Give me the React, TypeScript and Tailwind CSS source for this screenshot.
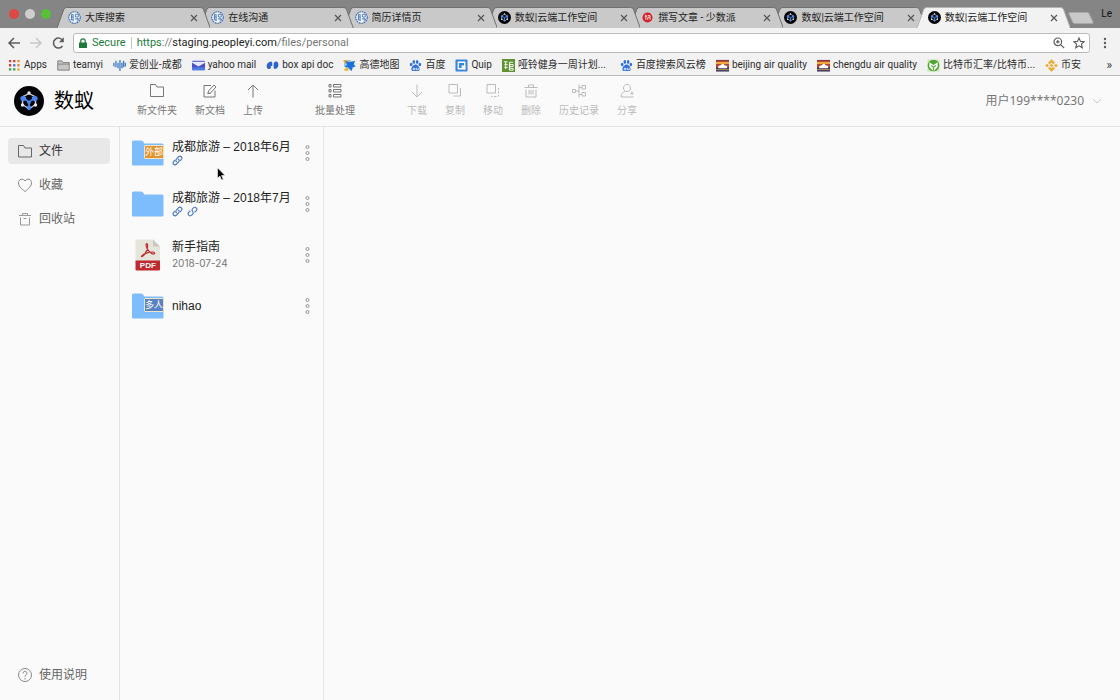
import React from "react";

const tabs = [
  { title: "大库搜索", icon: "hire" },
  { title: "在线沟通", icon: "hire" },
  { title: "简历详情页", icon: "hire" },
  { title: "数蚁|云端工作空间", icon: "ant" },
  { title: "撰写文章 - 少数派", icon: "sspai" },
  { title: "数蚁|云端工作空间", icon: "ant" },
  { title: "数蚁|云端工作空间", icon: "ant" },
];

const bookmarks = [
  { title: "Apps", icon: "apps" },
  { title: "teamyi", icon: "folder" },
  { title: "爱创业-成都", icon: "wave" },
  { title: "yahoo mail", icon: "mail" },
  { title: "box api doc", icon: "box" },
  { title: "高德地图", icon: "amap" },
  { title: "百度", icon: "paw" },
  { title: "Quip", icon: "quip" },
  { title: "哑铃健身一周计划...", icon: "gym", wide: true },
  { title: "百度搜索风云榜", icon: "paw" },
  { title: "beijing air quality", icon: "air" },
  { title: "chengdu air quality", icon: "air" },
  { title: "比特币汇率/比特币...", icon: "coin", wide: true },
  { title: "币安", icon: "binance" },
];

const actions = [
  { title: "新文件夹", icon: "folder", box: "w-[58px]" },
  { title: "新文档", icon: "edit", box: "w-12" },
  { title: "上传", icon: "up", box: "w-[38px]" },
  { title: "批量处理", icon: "batch", box: "mx-[34px] w-[58px]" },
  { title: "下载", icon: "down", box: "w-[38px]", disabled: true },
  { title: "复制", icon: "copy", box: "w-[38px]", disabled: true },
  { title: "移动", icon: "move", box: "w-[38px]", disabled: true },
  { title: "删除", icon: "trash", box: "w-[38px]", disabled: true },
  { title: "历史记录", icon: "history", box: "w-[58px]", disabled: true },
  { title: "分享", icon: "share", box: "w-[38px]", disabled: true },
];

const files = [
  { name: "成都旅游 – 2018年6月", type: "folder", badge: "外部", badgeBg: "bg-[#e2942f]", links: ["share"] },
  { name: "成都旅游 – 2018年7月", type: "folder", links: ["share", "collect"] },
  { name: "新手指南", type: "pdf", date: "2018-07-24" },
  { name: "nihao", type: "folder", badge: "多人", badgeBg: "bg-[#5783c4]" },
];

const AntLogo = ({ className }: { className: string }) => (
  <svg viewBox="0 0 30 30" className={className}>
    <circle cx="15" cy="15" r="15" fill="#050507" />
    <path d="M15 7.500 21.500 11v7.500L15 23l-6.500-4.500V11z" fill="none" stroke="#c9ced6" strokeWidth="1.400" />
    <path d="M9.500 12 15 16l5.500-4M15 16v6" fill="none" stroke="#3f76dc" strokeWidth="2" />
    <g fill="#4c86ee">
      <path d="m6.500 11 2.800-1.600 2.800 1.600v3l-2.800 1.600L6.500 14zM17.900 11l2.800-1.600 2.800 1.600v3l-2.800 1.600-2.800-1.600z" />
      <circle cx="15" cy="16.500" r="1.800" />
      <path d="m12.800 20.500 2.200-1.200 2.200 1.200V23L15 24.200 12.800 23z" />
    </g>
    <g fill="#e8ebf0">
      <circle cx="15" cy="7" r="1.700" />
      <circle cx="8.500" cy="19" r="1.700" />
      <circle cx="21.500" cy="19" r="1.700" />
    </g>
  </svg>
);

const TabIcon = ({ name }: { name: string }) => {
  if (name === "ant") return <AntLogo className="size-[13px] shrink-0" />;
  if (name === "sspai")
    return (
      <svg viewBox="0 0 12 12" className="mx-px size-[11px] shrink-0">
        <circle cx="6" cy="6" r="5.500" fill="#d2232a" />
        <path d="M3 4.500h2.500M4.200 3v5.500M6.300 4h2.500v1.800H6.300v2.700M8.800 6v2.500" stroke="#fff" strokeWidth=".9" fill="none" />
      </svg>
    );
  return (
    <svg viewBox="0 0 14 14" className="size-[13px] shrink-0">
      <circle cx="7" cy="7" r="6.200" fill="#f4f7fb" stroke="#3f6fb5" strokeWidth="1.200" strokeDasharray="2 .6" />
      <path d="M3 4h3M3 6.500h3M2.500 9.500H6M3.800 4v5.500M5.500 4v7M8 3.500h3v3H8zM7.500 8.500h4M9 8.500h2.200c0 1.500-.5 2.500-2 2.500" fill="none" stroke="#3f6fb5" strokeWidth=".9" />
    </svg>
  );
};

const bookmarkArt: Record<string, React.ReactNode> = {
  apps: (
    <>
      <path d="M1 1h2.500v2.500H1zM5.500 1H8v2.500H5.500zM1 5.500h2.500V8H1z" fill="#d6453b" />
      <path d="M10 1h2.500v2.500H10zM10 5.500h2.500V8H10z" fill="#e08c36" />
      <path d="M5.500 5.500H8V8H5.500z" fill="#3d78d8" />
      <path d="M1 10h2.500v2.500H1zM5.500 10H8v2.500H5.500z" fill="#3c9a50" />
      <path d="M10 10h2.500v2.500H10z" fill="#e0a82e" />
    </>
  ),
  folder: <path d="M.8 12V2h4.500l1.200 1.800h6.700V12zM.8 5.500h12.400" fill="#c6c6c6" stroke="#777" strokeWidth=".9" />,
  wave: <path d="M1 4v4M3.200 2v7M5.400 4v6M7.500 1v12M9.600 4v6M11.400 2v7M13.300 4v4" stroke="#3e7cc4" strokeWidth="1.400" fill="none" />,
  mail: (
    <>
      <rect x="0" y="2" width="14" height="10" rx="1" fill="#4a4fc4" />
      <path d="M0 3h14v1L7 8 0 4z" fill="#e5e9fb" />
      <path d="M0 9h14v3H0z" fill="#4c7de6" />
    </>
  ),
  box: (
    <path d="M6 3.500C2.500 3.500 1.300 6 1.500 8.200c.3 2.500 2.500 2.300 3.500.5M6 7.500V3.500M9 10c3.500 0 4-3.500 3.200-5.700C11.300 2.800 9.500 3.500 9 5v5" fill="#2d63cf" stroke="#2d63cf" strokeWidth="1.500" />
  ),
  amap: (
    <>
      <path d="M1 1h7l5 6-4 6-8-5z" fill="#8cc4ee" />
      <path d="m0 1 5 0 2 3-5 1z" fill="#f0b93a" />
      <path d="m13 2-6 1.500L2 2l2.500 4L2 8.500l3.500.5L9.500 13l.5-4 3.500-1-2-2z" fill="#1f6fd8" />
      <path d="m1 11 4-2 1 4H2z" fill="#f0b93a" />
    </>
  ),
  paw: (
    <g fill="#2f6fdc">
      <ellipse cx="2.300" cy="6" rx="1.400" ry="1.900" />
      <ellipse cx="5.200" cy="3.200" rx="1.400" ry="2" />
      <ellipse cx="8.800" cy="3.200" rx="1.400" ry="2" />
      <ellipse cx="11.700" cy="6" rx="1.400" ry="1.900" />
      <path d="M7 6c2 0 4.500 3 4.500 5s-2.500 2-4.500 2-4.500 0-4.500-2S5 6 7 6z" />
      <path d="M4.500 10h2v1.500h-2zM8 9.500v2h2v-2" fill="none" stroke="#fff" strokeWidth=".8" />
    </g>
  ),
  quip: (
    <>
      <rect x=".5" y=".5" width="13" height="13" rx="1" fill="#3a85dc" />
      <path d="M3.500 3.500h7v7h-7z" fill="none" stroke="#fff" strokeWidth="1.400" />
      <path d="M7 7h4.200v4.200H9.500L7 8.700z" fill="#fff" />
    </>
  ),
  gym: (
    <>
      <path d="M0 0h14v14H0z" fill="#5f9130" />
      <path d="M2 3h4M2.500 6H6M4 3v8M2.500 9H6M7.500 3.500h4.500M8 6h4v2H8zM8 10h4v2H8zM8 4v8" fill="none" stroke="#fff" strokeWidth="1" />
    </>
  ),
  air: (
    <>
      <path d="M0 1h14v12.500H0z" fill="#35355a" />
      <path d="M0 1.500h14V3H0z" fill="#c9362e" />
      <path d="M0 3h14v2.500H0z" fill="#f0a93c" />
      <path d="M0 5.500h14v3.500H0z" fill="#b9482f" />
      <path d="M2.500 10C1.500 7.500 3.500 6.500 4.800 7 6 4.500 9 5 9.500 7c2.500-.5 3.500 2 2 3z" fill="#fff" />
      <path d="M0 11h14v1H0z" fill="#caa35c" />
    </>
  ),
  coin: (
    <>
      <path d="M.5.500h13v13H.5z" fill="#cfe6bb" />
      <circle cx="7" cy="7" r="6.300" fill="#4fa52e" />
      <path d="M2.500 3.500 7 6.500l4.500-3v5L8 12.500H6l-3.500-4z" fill="#fff" />
      <path d="M4.500 7 7 9l2.500-2M7 9v3.500" stroke="#4fa52e" strokeWidth="1.200" fill="none" />
    </>
  ),
  binance: (
    <path d="m7 .5 3.500 3.500L9 5.500 7 3.500l-2 2L3.500 4zM7 5.300 8.700 7 7 8.700 5.300 7zM2.200 5.300 3.900 7 2.200 8.700.5 7zM11.800 5.300 13.500 7l-1.700 1.700L10.100 7zM7 10.500l2-2 1.500 1.500L7 13.500 3.500 10 5 8.500z" fill="#eba92c" stroke="#eba92c" strokeWidth=".5" />
  ),
};

const actionArt: Record<string, React.ReactNode> = {
  folder: <path d="M1.500 13.500v-12h5l1.500 2.500h6.500v9.500z" />,
  edit: <path d="M9 2.500H2v11.500h11V7.500M6 10.500l.5-2.500L12 2l2 2-5.500 6zM5.500 10.500h3" />,
  up: <path d="M8 14.500V2M3 7l5-5 5 5" />,
  down: <path d="M8 1.500V14M3 9l5 5 5-5" />,
  batch: <path d="M2 1.500h2v2.500H2zM6.500 1.500h7.500v2.500H6.500zM2 6.500h2V9H2zM6.500 6.500h7.500V9H6.500zM2 11.500h2V14H2zM6.500 11.500h7.500V14H6.500z" />,
  copy: <path d="M2 1.500h8.500V10H2zM13.500 5v8H6.500" />,
  move: <path d="M2 1.500h8.500V10H2zM13.500 5v2M13.500 8.500v2M13.500 12v1.500M11.500 13.500H9M7.500 13.500H6" />,
  trash: <path d="M1.500 4.500h13M5.500 4.500V2h5v2.500M3 6.500v7.500h10V6.500M6 7v4.500M8 7v4.500M10 7v4.500" />,
  history: <path d="M1.500 6.500h3v3h-3zM4.500 8H8M8 1.500v13M8 4.500h3M8 11.500h3M11 2.500h3.500v3.500H11zM11 9.500h3.500V13H11z" />,
  share: <path d="M8 1.500c2.200 0 3.500 1.500 3.500 3.500S10 8.500 8 8.500 4.500 7 4.500 5 5.800 1.500 8 1.500zM6 8.500c-2 1-4 2-4 5.500h12.500M13 8.500v3.500M11.300 10.200h3.500" />,
};

const LinkIcon = ({ kind }: { kind: string }) => (
  <svg viewBox="0 0 12 12" className="size-[11px]" fill="none" stroke="#4576c8" strokeWidth="1.200" strokeLinecap="round">
    {kind === "share" ? (
      <>
        <path d="M5 7.500C3.800 6.500 4 5.500 4.800 4.600l2.400-2.700c1.900-1.700 4.700.8 3.100 2.800L9 6.200" />
        <path d="M7 4.500c1.200 1 1 2 .2 2.900l-2.400 2.700C2.900 11.800.1 9.300 1.700 7.300L3 5.800" />
      </>
    ) : (
      <path d="M8.500 6.500 10.300 5c1.500-1.800-.8-4.600-3-3.200C5.500 3 5 4.500 6.200 6c1 1.500.5 3-1.300 4.200-2.200 1.400-4.700-1.200-3.200-3.200L3.500 5.500" />
    )}
  </svg>
);

const FolderIcon = () => (
  <svg viewBox="0 0 32 26" className="h-[26px] w-8">
    <path d="M0 2Q0 .5 1.500.5H9q1.500 0 2.200 1.200L12.500 3.500H30q1.500 0 1.500 1.500v19.500q0 1-1 1H1q-1 0-1-1z" fill="#7dbdfd" />
  </svg>
);

const PdfIcon = () => (
  <svg viewBox="0 0 26 32" className="mx-[3px] h-8 w-[26px]">
    <path d="M1.500.5h16.500l7 7V22H.5V1.500q0-1 1-1z" fill="#e6e5dc" />
    <path d="m18 .5 7 7h-6q-1 0-1-1z" fill="#c9c8bf" />
    <path d="M.5 21.500H25v9q0 1-1 1H1.500q-1 0-1-1z" fill="#c0292f" />
    <path d="M6.500 17.500C9 18.500 13.500 9 12.500 5.500c-.3-1.300-1.700-1-1.500.8.500 4 5 9.500 8 8.700 1.500-.6.300-2-1.500-2-4 0-10 2.300-11 4.500z" fill="none" stroke="#c0292f" strokeWidth="1.200" />
    <text x="12.800" y="29" textAnchor="middle" fontSize="8" fontWeight="700" fill="#fff" fontFamily="Liberation Sans, sans-serif">
      PDF
    </text>
  </svg>
);

const Tabs = () => {
  return (
    <div className="flex h-7 items-end bg-[#858585]">
      <div className="flex w-[57px] shrink-0 gap-[6px] self-center pb-px pl-[9px]">
        <span className="size-[10px] rounded-full bg-[#df4744]" />
        <span className="size-[10px] rounded-full bg-[#cecece]" />
        <span className="size-[10px] rounded-full bg-[#57c038]" />
      </div>
      <div role="tablist" className="isolate flex min-w-0 flex-1">
        {tabs.map((tab, i) => {
          const active = i === tabs.length - 1;
          return (
            <div
              key={i}
              role="tab"
              aria-selected={active}
              className="relative flex h-[21px] min-w-0 flex-1 items-center pl-[11px]"
              style={{ zIndex: active ? 20 : 10 - i }}
            >
              <svg viewBox="0 0 154 21" preserveAspectRatio="none" className="absolute inset-y-0 -right-[10px] left-0 -z-10 h-full w-[calc(100%+10px)]">
                <path
                  d="M0 21 7 2Q8 .5 10 .5H144Q146 .5 147 2L154 21"
                  fill={active ? "#f2f2f2" : "#c9c9c9"}
                  stroke={active ? "#b5b5b5" : "#6f6f6f"}
                />
              </svg>
              <TabIcon name={tab.icon} />
              <span className="ml-1 flex-1 truncate text-[10px] leading-4 text-[#222]">{tab.title}</span>
              <button aria-label="Close tab" className="mr-[2px] text-[#555]">
                <svg viewBox="0 0 8 8" className="size-2">
                  <path d="m1 1 6 6M7 1 1 7" stroke="currentColor" strokeWidth="1.200" />
                </svg>
              </button>
            </div>
          );
        })}
      </div>
      <div className="flex w-[60px] shrink-0 items-center justify-between self-center pr-2 pl-2">
        <button aria-label="New tab">
          <svg viewBox="0 0 26 12" className="mt-2 h-3 w-[26px]">
            <path d="M2 .5h17q1.500 0 2 1l4 8.500q.5 1.500-1 1.500H7q-1.500 0-2-1L1 2Q.5.500 2 .5z" fill="#c9c9c9" stroke="#a8a8a8" />
          </svg>
        </button>
        <span className="text-[10px] leading-4 text-[#111]">Le</span>
      </div>
    </div>
  );
};

const AddressBar = () => {
  return (
    <div className="flex h-[29px] items-center bg-[#f2f2f2] text-[#5c5c5c]">
      <div className="flex w-[73px] shrink-0 items-center gap-2 pl-[7px]">
        <button aria-label="Back">
          <svg viewBox="0 0 14 14" className="size-[14px]" fill="none" stroke="currentColor" strokeWidth="1.500">
            <path d="M13 7H2M7 2 2 7l5 5" />
          </svg>
        </button>
        <button aria-label="Forward" className="text-[#c8c8c8]">
          <svg viewBox="0 0 14 14" className="size-[14px]" fill="none" stroke="currentColor" strokeWidth="1.500">
            <path d="M1 7h11M7 2l5 5-5 5" />
          </svg>
        </button>
        <button aria-label="Reload">
          <svg viewBox="0 0 14 14" className="size-[14px]" fill="none" stroke="currentColor" strokeWidth="1.500">
            <path d="M11.500 10a5 5 0 1 1 .3-5.500" />
            <path d="M12.800 1.200v5h-5z" fill="currentColor" stroke="none" />
          </svg>
        </button>
      </div>
      <div className="flex h-5 min-w-0 flex-1 items-center rounded-[3px] border border-[#bcbcbc] bg-white pr-1 pl-[5px] text-[11px] leading-4">
        <svg viewBox="0 0 8 10" className="h-[10px] w-2">
          <path d="M0 4.500h8V10H0z" fill="#1d7a3a" />
          <path d="M1.800 5V3a2.200 2.200 0 0 1 4.400 0v2" fill="none" stroke="#1d7a3a" strokeWidth="1.200" />
        </svg>
        <span className="ml-[5px] text-[#1d7a3a]">Secure</span>
        <span className="mx-[5px] h-3 w-px bg-[#c4c4c4]" />
        <p className="flex-1 truncate text-[#777]">
          <span className="text-[#1d7a3a]">https</span>://<span className="text-[#222]">staging.peopleyi.com</span>/files/personal
        </p>
        <button aria-label="Zoom" className="mr-2">
          <svg viewBox="0 0 12 12" className="size-3" fill="none" stroke="currentColor" strokeWidth="1.200">
            <circle cx="4.800" cy="4.800" r="3.800" />
            <path d="m7.600 7.600 3.600 3.600M3 4.800h3.600M4.800 3v3.600" />
          </svg>
        </button>
        <button aria-label="Bookmark this page">
          <svg viewBox="0 0 12 12" className="size-3" fill="none" stroke="currentColor" strokeWidth="1.100">
            <path d="m6 1 1.500 3.400 3.700.3-2.800 2.400.9 3.700L6 8.800l-3.300 2 .9-3.700L.8 4.700l3.700-.3z" />
          </svg>
        </button>
      </div>
      <button aria-label="Menu" className="flex w-[30px] shrink-0 justify-center">
        <svg viewBox="0 0 4 12" className="h-3 w-1" fill="currentColor">
          <circle cx="2" cy="2" r="1.200" />
          <circle cx="2" cy="6" r="1.200" />
          <circle cx="2" cy="10" r="1.200" />
        </svg>
      </button>
    </div>
  );
};

const Bookmarks = () => {
  return (
    <div className="flex h-[19px] items-start justify-between border-b border-[#b9b9b9] bg-[#f2f2f2] pr-2 pl-2">
      <nav className="flex min-w-0 gap-[10px]">
        {bookmarks.map((mark) => (
          <a
            key={mark.title}
            href="#"
            className={`flex shrink-0 items-center gap-[3px] text-[10px] leading-4 whitespace-nowrap text-[#2c2c2c] ${mark.wide ? "w-[108px]" : ""}`}
          >
            <svg viewBox="0 0 14 14" className="size-[13px] shrink-0">
              {bookmarkArt[mark.icon]}
            </svg>
            {mark.title}
          </a>
        ))}
      </nav>
      <button aria-label="More bookmarks" className="text-xs leading-4 text-[#333]">
        »
      </button>
    </div>
  );
};

const Header = () => {
  return (
    <header className="flex h-[51px] items-center border-b border-[#e4e4e4] bg-[#fafafa]">
      <a href="#" className="flex w-32 shrink-0 items-center gap-[10px] pl-[14px] text-xl leading-7 text-black">
        <AntLogo className="size-[30px]" />
        数蚁
      </a>
      <div className="flex flex-1">
        {actions.map((action) => (
          <button
            key={action.title}
            disabled={action.disabled}
            className={`flex shrink-0 flex-col items-center gap-1 text-[10px] leading-4 whitespace-nowrap ${action.box} ${
              action.disabled ? "text-[#bbb]" : "text-[#777]"
            }`}
          >
            <svg viewBox="0 0 16 16" className="size-4" fill="none" stroke="currentColor">
              {actionArt[action.icon]}
            </svg>
            {action.title}
          </button>
        ))}
      </div>
      <button className="mr-[18px] flex items-center gap-2 font-['Noto_Sans','Noto_Sans_CJK_SC',sans-serif] text-xs leading-4 text-[#777]">
        用户199****0230
        <svg viewBox="0 0 10 10" className="size-[10px]" fill="none" stroke="#ccc">
          <path d="m1 3 4 4 4-4" />
        </svg>
      </button>
    </header>
  );
};

const Sidebar = () => {
  return (
    <aside className="flex w-[120px] shrink-0 flex-col border-r border-[#e4e4e4] pt-[11px] pr-[9px] pb-3 pl-2 text-xs text-[#666]">
      <nav className="flex flex-1 flex-col gap-2">
        <a href="#" className="flex h-[26px] items-center gap-[6px] rounded bg-[#e8e8e8] px-[9px] text-[#333]">
          <svg viewBox="0 0 16 16" className="size-4" fill="none" stroke="#666">
            <path d="M1.500 14V2.500h5L8 5h6.500v9z" />
          </svg>
          文件
        </a>
        <a href="#" className="flex h-[26px] items-center gap-[6px] px-[9px]">
          <svg viewBox="0 0 16 16" className="size-4" fill="none" stroke="#888">
            <path d="M8 14.500C4 11.500 1.500 9 1.500 5.800 1.500 2 6 .8 8 4c2-3.200 6.500-2 6.500 1.800C14.500 9 12 11.500 8 14.500z" />
          </svg>
          收藏
        </a>
        <a href="#" className="flex h-[26px] items-center gap-[6px] px-[9px]">
          <svg viewBox="0 0 16 16" className="size-4" fill="none" stroke="#999">
            <path d="M2 4.500h12M5.500 4.500v-2h5v2M3.500 6.500v7.500h9V6.500M6.500 7.500h3" />
          </svg>
          回收站
        </a>
      </nav>
      <a href="#" className="flex h-[26px] items-center gap-[6px] px-[9px]">
        <svg viewBox="0 0 16 16" className="size-4" fill="none" stroke="#888">
          <circle cx="8" cy="8" r="6.500" />
          <path d="M6 6.500C6 3.500 10 3.700 10 6.200 10 7.800 8 8 8 9.800M8 11v1.500" />
        </svg>
        使用说明
      </a>
    </aside>
  );
};

const FileList = () => {
  return (
    <section className="relative w-[204px] shrink-0 border-r border-[#e8e8e8]">
      <ul>
        {files.map((file) => (
          <li key={file.name} className="flex h-[51px] items-center gap-2 pr-[13px] pl-3">
            <div className="relative w-8 shrink-0">
              {file.type === "pdf" ? <PdfIcon /> : <FolderIcon />}
              {file.badge && (
                <span className={`absolute top-[5px] right-0 rounded-[1px] border border-[#f3e3c8] text-[9px] leading-3 text-white ${file.badgeBg}`}>
                  {file.badge}
                </span>
              )}
            </div>
            <div className="min-w-0 flex-1">
              <p className="text-xs leading-4 whitespace-nowrap text-[#222]">{file.name}</p>
              {file.links && (
                <div className="flex gap-1">
                  {file.links.map((kind) => (
                    <LinkIcon key={kind} kind={kind} />
                  ))}
                </div>
              )}
              {file.date && <p className="font-['Inter',sans-serif] text-[10px] leading-4 text-[#777]">{file.date}</p>}
            </div>
            <button aria-label="File actions">
              <svg viewBox="0 0 5 18" className="h-[18px] w-[5px]" fill="none" stroke="#888" strokeWidth=".9">
                <circle cx="2.500" cy="3" r="1.500" />
                <circle cx="2.500" cy="9" r="1.500" />
                <circle cx="2.500" cy="15" r="1.500" />
              </svg>
            </button>
          </li>
        ))}
      </ul>
      {/* mouse pointer */}
      <svg viewBox="0 0 9 14" className="absolute top-10 left-[97px] h-[14px] w-[9px]">
        <path d="M.5.800v10.500l2.400-2.200 1.700 4 1.700-.7-1.700-3.900h3.500z" fill="#000" stroke="#fff" strokeWidth=".6" />
      </svg>
    </section>
  );
};

const App = () => {
  return (
    <div className="flex min-h-screen flex-col bg-[#fafafa] font-['Roboto','Noto_Sans_CJK_SC',sans-serif]">
      <Tabs />
      <AddressBar />
      <Bookmarks />
      <Header />
      <div className="flex flex-1 font-['Liberation_Sans','Noto_Sans_CJK_SC',sans-serif]">
        <Sidebar />
        <FileList />
        <main className="flex-1" />
      </div>
    </div>
  );
};

export default App;
